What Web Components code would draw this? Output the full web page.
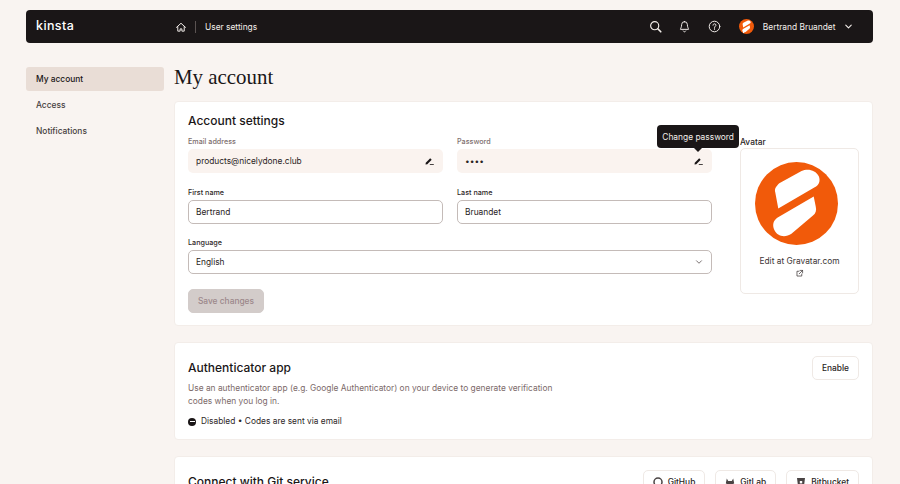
<!DOCTYPE html>
<html lang="en">
<head>
<meta charset="utf-8">
<title>My account</title>
<style>
  html, body { margin: 0; height: 484px; overflow: hidden; }
  body { background: #f9f4f1; font-family: Inter, "Liberation Sans", sans-serif; color: #1a1617; }
</style>
</head>
<body>
<app-shell>
  <app-topbar slot="top" user="Bertrand Bruandet"></app-topbar>
  <side-nav slot="nav"></side-nav>
  <h-title slot="main">My account</h-title>
  <account-settings slot="main"></account-settings>
  <auth-card slot="main"></auth-card>
  <git-card slot="main"></git-card>
</app-shell>

<script>
const ICONS = {
  home: `<path d="M2 8.500 8 3l6 5.500M3.700 7.500v6h3.100V10.500h2.400v3h3.100v-6" />`,
  search: `<circle cx="7" cy="7" r="5"/><path d="m10.800 10.800 3.700 3.700" stroke-width="2"/>`,
  bell: `<path d="M8 2a3.500 3.500 0 0 0-3.500 3.500c0 3.500-1.500 5-1.500 6h10c0-1-1.500-2.500-1.500-6A3.500 3.500 0 0 0 8 2ZM6.500 13.500c.4.700.9 1 1.500 1s1.100-.3 1.500-1"/>`,
  help: `<circle cx="8" cy="8" r="6.500"/><path d="M6.200 6.400c0-1 .8-1.700 1.800-1.700s1.800.7 1.800 1.600c0 1.400-1.800 1.500-1.800 2.900M8 10.700v.8"/>`,
  chevron: `<path d="m4 6 4 4 4-4"/>`,
  external: `<path d="M7 4H3.500v8.500H12V9M9 2.500h4.500V7M13.500 2.500 7.500 8.500"/>`,
};
const icon = (name, size, color, width = 1.4) =>
  `<svg width="${size}" height="${size}" viewBox="0 0 16 16" fill="none" stroke="${color}" stroke-width="${width}" stroke-linecap="round" stroke-linejoin="round">${ICONS[name]}</svg>`;

// pencil with a little underline, used on the read-only fields
const editIcon = `<svg width="9" height="8" viewBox="0 0 9 8"><path d="M.5 7.500.8 5.700 5.200 1.300 6.700 2.800 2.300 7.200Z" fill="#1a1617"/><path d="M4.800 7.500H8.800" stroke="#1a1617" stroke-width=".8"/></svg>`;

const logoMark = (size) => `<svg width="${size}" height="${size}" viewBox="0 0 82 82">
  <circle cx="41" cy="41" r="41" fill="#f15a0a"/>
  <path d="M23 46 20 30C19 26 21 24 24 21L46 9C52 6 60 8 63 14 65 19 63 23 59 25Z" fill="#fff"/>
  <path d="M58 34 60 44C61 48 60 51 57 53L36 71C30 75 22 74 19 67 17 62 18 58 22 55Z" fill="#fff"/>
</svg>`;

class AppShell extends HTMLElement {
  constructor() {
    super();
    this.attachShadow({ mode: "open" }).innerHTML = `
      <style>
        :host { display: block; padding: 10px 27px 0 26px; }
        .body { display: grid; grid-template-columns: 138px 1fr; column-gap: 10px; margin-top: 5px; }
        .main { display: flex; flex-direction: column; min-width: 0; }
      </style>
      <slot name="top"></slot>
      <div class="body">
        <slot name="nav"></slot>
        <div class="main"><slot name="main"></slot></div>
      </div>`;
  }
}

class AppTopbar extends HTMLElement {
  constructor() {
    super();
    const user = this.getAttribute("user") || "";
    this.attachShadow({ mode: "open" }).innerHTML = `
      <style>
        :host { display: flex; align-items: center; height: 33px; background: #1a1617; border-radius: 4px; color: #f3eeea; font-size: 8.400px; }
        .logo { width: 139px; margin-left: 10px; font: 500 12.500px/1 Inter, sans-serif; letter-spacing: .4px; color: #fff; }
        .crumb { display: flex; align-items: center; }
        .crumb svg { display: block; }
        .sep { width: 1px; height: 12px; background: #5b5352; margin: 0 9px 0 8px; }
        .right { margin-left: auto; display: flex; align-items: center; }
        .right svg { display: block; }
        .ic { margin-right: 16.500px; display: flex; }
        .avatar { width: 15px; height: 15px; margin: 0 9px 0 1.500px; display: flex; }
        .chev { margin: 0 19px 0 7.500px; display: flex; }
      </style>
      <span class="logo">kinsta</span>
      <div class="crumb">${icon("home", 12, "#f3eeea", 1.300)}<span class="sep"></span><span>User settings</span></div>
      <div class="right">
        <span class="ic">${icon("search", 13, "#f3eeea")}</span>
        <span class="ic">${icon("bell", 13, "#f3eeea", 1.200)}</span>
        <span class="ic">${icon("help", 13, "#f3eeea", 1.200)}</span>
        <span class="avatar">${logoMark(15)}</span>
        <span>${user}</span>
        <span class="chev">${icon("chevron", 11, "#f3eeea", 1.600)}</span>
      </div>`;
  }
}

class SideNav extends HTMLElement {
  constructor() {
    super();
    const items = ["My account", "Access", "Notifications"];
    this.attachShadow({ mode: "open" }).innerHTML = `
      <style>
        :host { display: flex; flex-direction: column; gap: 2px; margin-top: 19px; align-self: start; font-size: 8.400px; color: #453d3d; }
        a { display: flex; align-items: center; height: 24px; padding-left: 10px; border-radius: 3px; font-weight: 500; }
        a.on { background: #e9ddd6; color: #1a1617; }
      </style>
      ${items.map((t, i) => `<a class="${i === 0 ? "on" : ""}">${t}</a>`).join("")}`;
  }
}

class HTitle extends HTMLElement {
  constructor() {
    super();
    this.attachShadow({ mode: "open" }).innerHTML = `
      <style>
        :host { display: block; height: 53px; padding-top: 17px; box-sizing: border-box; font: 400 20.900px/25px "Liberation Serif", serif; color: #1a1617; }
      </style>
      <slot></slot>`;
  }
}

// white card used by all three sections
class UiCard extends HTMLElement {
  constructor() {
    super();
    this.attachShadow({ mode: "open" }).innerHTML = `
      <style>
        :host { display: block; background: #fff; border: 1px solid #f3ede9; border-radius: 4px; padding: 13px 13px 12px; margin-bottom: 16px; box-sizing: border-box; }
      </style>
      <slot></slot>`;
  }
}

class TextField extends HTMLElement {
  constructor() {
    super();
    const label = this.getAttribute("label");
    const value = this.getAttribute("value");
    const readonly = this.hasAttribute("readonly");
    const chevron = this.hasAttribute("select");
    this.attachShadow({ mode: "open" }).innerHTML = `
      <style>
        :host { display: block; position: relative; min-width: 0; }
        label { display: block; height: 13px; font-size: 7.200px; line-height: 11px; font-weight: 500; color: ${readonly ? "#7d6e6e" : "#2e2828"}; }
        .box { display: flex; align-items: center; justify-content: space-between; height: 24px; box-sizing: border-box; border-radius: 5px; font-size: 8.400px; color: #2a2424; }
        .ro { background: #faf3ef; padding: 0 9px 0 8px; }
        .rw { background: #fff; border: 1px solid #c4bbb8; padding: 0 7px; }
        .box svg { display: block; flex: none; }
      </style>
      <label>${label}</label>
      <div class="box ${readonly ? "ro" : "rw"}">
        <span>${value}</span>
        ${readonly ? editIcon : ""}
        ${chevron ? icon("chevron", 10, "#5d5353", 1.300) : ""}
      </div>
      <slot></slot>`;
  }
}

class UiTooltip extends HTMLElement {
  constructor() {
    super();
    this.attachShadow({ mode: "open" }).innerHTML = `
      <style>
        :host { position: absolute; right: -27px; bottom: 25px; height: 23px; display: flex; align-items: center; padding: 0 5px; background: #1a1617; color: #f3eeea; border-radius: 4px; font-size: 8.400px; white-space: nowrap; }
        :host::after { content: ""; position: absolute; left: 50%; margin-left: -4px; top: 100%; border: 4px solid transparent; border-top-color: #1a1617; border-bottom: 0; }
      </style>
      <slot></slot>`;
  }
}

class UiButton extends HTMLElement {
  constructor() {
    super();
    this.attachShadow({ mode: "open" }).innerHTML = `
      <style>
        :host { display: inline-flex; align-items: center; gap: 5px; height: 24px; padding: 0 9px; box-sizing: border-box; border: 1px solid #efe9e5; border-radius: 5px; background: #fff; font-size: 8.400px; font-weight: 500; color: #2a2424; white-space: nowrap; flex: none; }
        :host([disabled]) { background: #d3ccca; border-color: #d3ccca; color: #9c888a; }
      </style>
      <slot></slot>`;
  }
}

class AccountSettings extends HTMLElement {
  constructor() {
    super();
    this.attachShadow({ mode: "open" }).innerHTML = `
      <style>
        :host { display: block; }
        ui-card { padding-top: 11px; }
        h2 { margin: 0 0 7px; font-size: 12px; line-height: 16px; font-weight: 500; color: #1a1617; }
        .wrap { display: grid; grid-template-columns: 1fr 119px; column-gap: 28px; }
        .form { display: grid; grid-template-columns: 1fr 1fr; column-gap: 14px; row-gap: 13.500px; align-content: start; }
        .wide { grid-column: 1 / -1; }
        ui-button { justify-self: start; grid-column: 1 / -1; margin-top: 1.500px; width: 76px; justify-content: center; padding: 0; }
        .av-label { height: 13px; font-size: 8.400px; line-height: 12px; font-weight: 500; color: #2a2424; }
        .av-box { height: 146px; margin-top: -1px; box-sizing: border-box; border: 1px solid #efe9e5; border-radius: 5px; display: flex; flex-direction: column; align-items: center; padding-top: 13px; font-size: 8.400px; color: #3d3636; }
        .av-box svg { display: block; }
        .av-box > svg { margin-left: -7px; }
        .edit { margin-top: 10px; line-height: 12px; }
        .ext { margin-top: 2px; }
      </style>
      <ui-card>
        <h2>Account settings</h2>
        <div class="wrap">
          <div class="form">
            <text-field label="Email address" value="products@nicelydone.club" readonly></text-field>
            <text-field label="Password" value="••••" readonly><ui-tooltip>Change password</ui-tooltip></text-field>
            <text-field label="First name" value="Bertrand"></text-field>
            <text-field label="Last name" value="Bruandet"></text-field>
            <text-field class="wide" label="Language" value="English" select></text-field>
            <ui-button disabled>Save changes</ui-button>
          </div>
          <div>
            <div class="av-label">Avatar</div>
            <div class="av-box">
              ${logoMark(83)}
              <div class="edit">Edit at Gravatar.com</div>
              <div class="ext">${icon("external", 9, "#3d3636", 1.300)}</div>
            </div>
          </div>
        </div>
      </ui-card>`;
  }
}

class AuthCard extends HTMLElement {
  constructor() {
    super();
    this.attachShadow({ mode: "open" }).innerHTML = `
      <style>
        :host { display: block; }
        ui-card { padding-bottom: 11px; }
        .head { display: flex; justify-content: space-between; align-items: center; }
        h2 { margin: -1px 0 0; font-size: 12px; line-height: 16px; font-weight: 500; color: #1a1617; }
        p { margin: 2px 0 0; width: 370px; font-size: 8.400px; line-height: 13px; color: #7c6a6a; }
        .status { display: flex; align-items: center; gap: 5px; margin-top: 7px; font-size: 8.400px; line-height: 13px; color: #2e2828; }
        .dot { width: 8px; height: 8px; border-radius: 50%; background: #1a1617; position: relative; }
        .dot::after { content: ""; position: absolute; left: 1.500px; right: 1.500px; top: 3.500px; height: 1px; background: #fff; }
      </style>
      <ui-card>
        <div class="head"><h2>Authenticator app</h2><ui-button>Enable</ui-button></div>
        <p>Use an authenticator app (e.g. Google Authenticator) on your device to generate verification codes when you log in.</p>
        <div class="status"><span class="dot"></span>Disabled • Codes are sent via email</div>
      </ui-card>`;
  }
}

class GitCard extends HTMLElement {
  constructor() {
    super();
    this.attachShadow({ mode: "open" }).innerHTML = `
      <style>
        :host { display: block; }
        .head { display: flex; align-items: center; }
        h2 { margin: -1px 0 0; font-size: 12px; line-height: 16px; font-weight: 500; color: #1a1617; }
        .btns { margin-left: auto; display: flex; gap: 10px; }
        svg { display: block; }
      </style>
      <ui-card>
        <div class="head">
          <h2>Connect with Git service</h2>
          <div class="btns">
            <ui-button><svg width="10" height="10" viewBox="0 0 10 10"><circle cx="5" cy="5" r="4" fill="none" stroke="#4a4444" stroke-width="1.500"/></svg>GitHub</ui-button>
            <ui-button><svg width="10" height="10" viewBox="0 0 10 10"><path d="M5 9.500 .8 6.200 1.800 1.500 3.200 4h3.600L8.200 1.500 9.200 6.200Z" fill="#4a4444"/></svg>GitLab</ui-button>
            <ui-button><svg width="10" height="10" viewBox="0 0 10 10"><path d="M1 1h8L8 9H2Z" fill="#4a4444"/><rect x="3.800" y="4" width="2.400" height="2.400" fill="#fff"/></svg>Bitbucket</ui-button>
          </div>
        </div>
      </ui-card>`;
  }
}

customElements.define("app-shell", AppShell);
customElements.define("app-topbar", AppTopbar);
customElements.define("side-nav", SideNav);
customElements.define("h-title", HTitle);
customElements.define("ui-card", UiCard);
customElements.define("text-field", TextField);
customElements.define("ui-tooltip", UiTooltip);
customElements.define("ui-button", UiButton);
customElements.define("account-settings", AccountSettings);
customElements.define("auth-card", AuthCard);
customElements.define("git-card", GitCard);
</script>
</body>
</html>
